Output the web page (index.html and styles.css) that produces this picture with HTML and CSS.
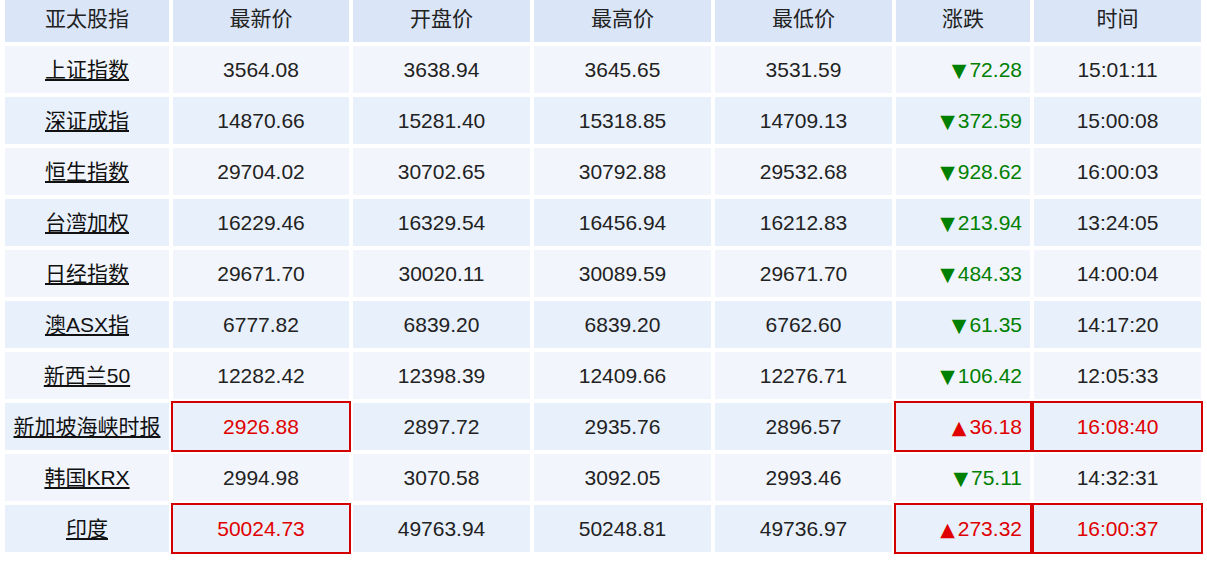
FILE: index.html
```html
<!DOCTYPE html>
<html lang="zh-CN">
<head>
<meta charset="utf-8">
<title>亚太股指</title>
<link rel="stylesheet" href="styles.css">
</head>
<body>
<table class="quotes">
  <thead>
    <tr>
      <th class="c1">亚太股指</th>
      <th class="c2">最新价</th>
      <th class="c3">开盘价</th>
      <th class="c4">最高价</th>
      <th class="c5">最低价</th>
      <th class="c6">涨跌</th>
      <th class="c7">时间</th>
    </tr>
  </thead>
  <tbody>
    <tr class="odd">
      <td class="name"><a href="#">上证指数</a></td><td>3564.08</td><td>3638.94</td><td>3645.65</td><td>3531.59</td>
      <td class="chg down"><span class="arrow">▼</span>72.28</td><td>15:01:11</td>
    </tr>
    <tr class="even">
      <td class="name"><a href="#">深证成指</a></td><td>14870.66</td><td>15281.40</td><td>15318.85</td><td>14709.13</td>
      <td class="chg down"><span class="arrow">▼</span>372.59</td><td>15:00:08</td>
    </tr>
    <tr class="odd">
      <td class="name"><a href="#">恒生指数</a></td><td>29704.02</td><td>30702.65</td><td>30792.88</td><td>29532.68</td>
      <td class="chg down"><span class="arrow">▼</span>928.62</td><td>16:00:03</td>
    </tr>
    <tr class="even">
      <td class="name"><a href="#">台湾加权</a></td><td>16229.46</td><td>16329.54</td><td>16456.94</td><td>16212.83</td>
      <td class="chg down"><span class="arrow">▼</span>213.94</td><td>13:24:05</td>
    </tr>
    <tr class="odd">
      <td class="name"><a href="#">日经指数</a></td><td>29671.70</td><td>30020.11</td><td>30089.59</td><td>29671.70</td>
      <td class="chg down"><span class="arrow">▼</span>484.33</td><td>14:00:04</td>
    </tr>
    <tr class="even">
      <td class="name"><a href="#">澳ASX指</a></td><td>6777.82</td><td>6839.20</td><td>6839.20</td><td>6762.60</td>
      <td class="chg down"><span class="arrow">▼</span>61.35</td><td>14:17:20</td>
    </tr>
    <tr class="odd">
      <td class="name"><a href="#">新西兰50</a></td><td>12282.42</td><td>12398.39</td><td>12409.66</td><td>12276.71</td>
      <td class="chg down"><span class="arrow">▼</span>106.42</td><td>12:05:33</td>
    </tr>
    <tr class="even">
      <td class="name"><a href="#">新加坡海峡时报</a></td><td class="hl">2926.88</td><td>2897.72</td><td>2935.76</td><td>2896.57</td>
      <td class="chg up hl"><span class="arrow">▲</span>36.18</td><td class="hl">16:08:40</td>
    </tr>
    <tr class="odd">
      <td class="name"><a href="#">韩国KRX</a></td><td>2994.98</td><td>3070.58</td><td>3092.05</td><td>2993.46</td>
      <td class="chg down"><span class="arrow">▼</span>75.11</td><td>14:32:31</td>
    </tr>
    <tr class="even">
      <td class="name"><a href="#">印度</a></td><td class="hl">50024.73</td><td>49763.94</td><td>50248.81</td><td>49736.97</td>
      <td class="chg up hl"><span class="arrow">▲</span>273.32</td><td class="hl">16:00:37</td>
    </tr>
  </tbody>
</table>
</body>
</html>
```

FILE: styles.css
```css
html, body {
  margin: 0;
  padding: 0;
  background: #ffffff;
}

body {
  font-family: "Liberation Sans", Arial, "Noto Sans CJK SC", sans-serif;
  font-size: 21px;
  color: #222222;
}

.quotes {
  table-layout: fixed;
  width: 1204px;
  border-collapse: separate;
  border-spacing: 4px;
  margin: -4px 0 0 1px;
}

.quotes th {
  height: 42px;
  padding: 0 0 9px 0;
  box-sizing: border-box;
  background: #dae6f8;
  font-weight: normal;
  text-align: center;
  vertical-align: middle;
  color: #222222;
}

.c1 { width: 164px; }
.c2 { width: 176px; }
.c3 { width: 177px; }
.c4 { width: 177px; }
.c5 { width: 177px; }
.c6 { width: 134px; }
.c7 { width: 167px; }

.quotes td {
  height: 47px;
  padding: 0;
  box-sizing: border-box;
  text-align: center;
  vertical-align: middle;
  white-space: nowrap;
}

.quotes td.name {
  padding-bottom: 4px;
}

.odd td { background: #f2f6fc; }
.even td { background: #e8f0fb; }

.quotes a {
  color: #111111;
  text-decoration: underline;
  text-underline-offset: 2px;
}

.quotes td.chg {
  text-align: right;
  padding-right: 8px;
}

.arrow {
  font-family: "DejaVu Sans", sans-serif;
  font-size: 19px;
  margin-right: 3px;
}

.down { color: #008000; }
.up { color: #e00000; }

.quotes td.hl {
  color: #e00000;
  outline: 2px solid #d40000;
}
```
